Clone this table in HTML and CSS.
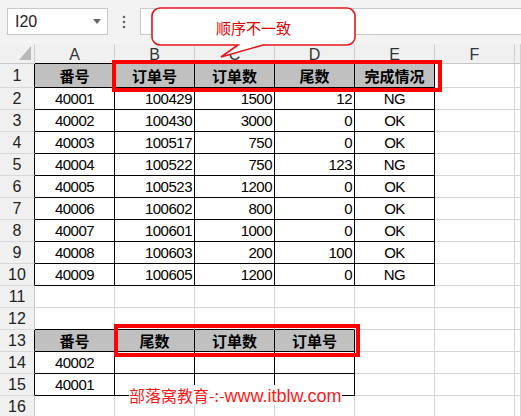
FILE: index.html
```html
<!DOCTYPE html>
<html lang="zh">
<head>
<meta charset="utf-8">
<title>Sheet</title>
<link rel="stylesheet" href="styles.css">
</head>
<body>
<div class="app">
  <div class="toolbar">
    <div class="namebox"><span class="nm">I20</span><span class="caret"></span></div>
    <div class="dots"><svg width="4" height="14" viewBox="0 0 4 14"><circle cx="2" cy="2" r="1.3" fill="#666"/><circle cx="2" cy="7" r="1.3" fill="#666"/><circle cx="2" cy="12" r="1.3" fill="#666"/></svg></div>
    <div class="fx"></div>
  </div>
  <div class="sheet">
    <div class="ch corner"><span class="tri"></span></div><div class="ch bb">A</div><div class="ch bb">B</div><div class="ch bb">C</div><div class="ch bb">D</div><div class="ch bb">E</div><div class="ch">F</div><div class="ch"></div>

    <div class="rh br">1</div><div class="c hd blk">番号</div><div class="c hd blk">订单号</div><div class="c hd blk">订单数</div><div class="c hd blk">尾数</div><div class="c hd blk">完成情况</div><div class="c"></div><div class="c"></div>

    <div class="rh br">2</div><div class="c ctr blk">40001</div><div class="c num blk">100429</div><div class="c num blk">1500</div><div class="c num blk">12</div><div class="c ctr blk">NG</div><div class="c"></div><div class="c"></div>
    <div class="rh br">3</div><div class="c ctr blk">40002</div><div class="c num blk">100430</div><div class="c num blk">3000</div><div class="c num blk">0</div><div class="c ctr blk">OK</div><div class="c"></div><div class="c"></div>
    <div class="rh br">4</div><div class="c ctr blk">40003</div><div class="c num blk">100517</div><div class="c num blk">750</div><div class="c num blk">0</div><div class="c ctr blk">OK</div><div class="c"></div><div class="c"></div>
    <div class="rh br">5</div><div class="c ctr blk">40004</div><div class="c num blk">100522</div><div class="c num blk">750</div><div class="c num blk">123</div><div class="c ctr blk">NG</div><div class="c"></div><div class="c"></div>
    <div class="rh br">6</div><div class="c ctr blk">40005</div><div class="c num blk">100523</div><div class="c num blk">1200</div><div class="c num blk">0</div><div class="c ctr blk">OK</div><div class="c"></div><div class="c"></div>
    <div class="rh br">7</div><div class="c ctr blk">40006</div><div class="c num blk">100602</div><div class="c num blk">800</div><div class="c num blk">0</div><div class="c ctr blk">OK</div><div class="c"></div><div class="c"></div>
    <div class="rh br">8</div><div class="c ctr blk">40007</div><div class="c num blk">100601</div><div class="c num blk">1000</div><div class="c num blk">0</div><div class="c ctr blk">OK</div><div class="c"></div><div class="c"></div>
    <div class="rh br">9</div><div class="c ctr blk">40008</div><div class="c num blk">100603</div><div class="c num blk">200</div><div class="c num blk">100</div><div class="c ctr blk">OK</div><div class="c"></div><div class="c"></div>
    <div class="rh br">10</div><div class="c ctr blk">40009</div><div class="c num blk">100605</div><div class="c num blk">1200</div><div class="c num blk">0</div><div class="c ctr blk">NG</div><div class="c"></div><div class="c"></div>

    <div class="rh">11</div><div class="c"></div><div class="c"></div><div class="c"></div><div class="c"></div><div class="c"></div><div class="c"></div><div class="c"></div>
    <div class="rh">12</div><div class="c bb"></div><div class="c bb"></div><div class="c bb"></div><div class="c bb"></div><div class="c"></div><div class="c"></div><div class="c"></div>

    <div class="rh br">13</div><div class="c hd blk">番号</div><div class="c hd blk">尾数</div><div class="c hd blk">订单数</div><div class="c hd blk">订单号</div><div class="c"></div><div class="c"></div><div class="c"></div>
    <div class="rh br">14</div><div class="c ctr blk">40002</div><div class="c blk"></div><div class="c blk"></div><div class="c blk"></div><div class="c"></div><div class="c"></div><div class="c"></div>
    <div class="rh br">15</div><div class="c ctr blk">40001</div><div class="c blk"></div><div class="c blk"></div><div class="c blk"></div><div class="c"></div><div class="c"></div><div class="c"></div>
    <div class="rh">16</div><div class="c"></div><div class="c"></div><div class="c"></div><div class="c"></div><div class="c"></div><div class="c"></div><div class="c"></div>
  </div>

  <div class="callout">
    <svg width="210" height="56" viewBox="0 0 210 56"><path d="M10,3 H197 A8,8 0 0 1 205,11 V32 A8,8 0 0 1 197,40 H113 L71,52 L88,40 H10 A8,8 0 0 1 2,32 V11 A8,8 0 0 1 10,3 Z" fill="#fff" stroke="#e8161d" stroke-width="1.6"/></svg>
    <div class="callout-text">顺序不一致</div>
  </div>
  <div class="redbox box1"></div>
  <div class="redbox box2"></div>
  <div class="watermark">部落窝教育-:-<span class="wm-lat">www.itblw.com</span></div>
</div>
</body>
</html>
```
FILE: styles.css
```css
html, body {
  margin: 0;
  padding: 0;
  background: #fff;
}
body {
  width: 521px;
  height: 416px;
  overflow: hidden;
  font-family: "Liberation Sans", "Noto Sans CJK SC", sans-serif;
}
.app {
  position: relative;
  width: 521px;
  height: 416px;
  overflow: hidden;
}
.toolbar {
  height: 44px;
  box-sizing: border-box;
  padding-top: 8px;
  background: #f3f3f3;
  display: flex;
  align-items: flex-start;
}
.namebox {
  margin-left: 7px;
  width: 101px;
  height: 27px;
  box-sizing: border-box;
  border: 1px solid #c8c8c8;
  background: #fff;
  display: flex;
  align-items: center;
  justify-content: space-between;
  padding: 0 6px 0 7px;
}
.nm {
  font-size: 16px;
  color: #222;
}
.caret {
  width: 0;
  height: 0;
  border-left: 4px solid transparent;
  border-right: 4px solid transparent;
  border-top: 5px solid #666;
}
.dots {
  width: 32px;
  height: 27px;
  display: flex;
  align-items: center;
  justify-content: center;
}
.fx {
  flex: 1;
  height: 27px;
  box-sizing: border-box;
  border: 1px solid #c8c8c8;
  border-right: none;
  background: #fff;
}
.sheet {
  display: grid;
  grid-template-columns: 35px repeat(6, 80px) 1fr;
  grid-template-rows: 20px 24px;
  grid-auto-rows: 22px;
}
.sheet > div {
  box-sizing: border-box;
  border-right: 1px solid #d4d4d4;
  border-bottom: 1px solid #d4d4d4;
  display: flex;
  align-items: center;
  overflow: hidden;
  white-space: nowrap;
}
.ch {
  background: #f0f0f0;
  justify-content: center;
  font-size: 16px;
  color: #333;
  padding-top: 2px;
}
.sheet > .ch {
  border-bottom-color: #c6c6c6;
  border-right-color: #d0d0d0;
}
.corner {
  position: relative;
}
.tri {
  position: absolute;
  right: 3px;
  bottom: 3px;
  width: 0;
  height: 0;
  border-left: 12px solid transparent;
  border-bottom: 14px solid #b8b8b8;
}
.rh {
  background: #f0f0f0;
  justify-content: center;
  font-size: 16px;
  color: #222;
}
.sheet > .rh {
  border-right-color: #c6c6c6;
  border-bottom-color: #d8d8d8;
}
.c {
  font-size: 15px;
  letter-spacing: -0.5px;
  color: #000;
}
.ctr {
  justify-content: center;
}
.num {
  justify-content: flex-end;
  padding-right: 2px;
}
.hd {
  background: #c0c0c0;
  justify-content: center;
  font-weight: bold;
  letter-spacing: 0;
  font-family: "Noto Sans CJK SC", sans-serif;
}
.sheet > .blk {
  border-right-color: #000;
  border-bottom-color: #000;
}
.sheet > .bb {
  border-bottom-color: #000;
}
.sheet > .br {
  border-right-color: #000;
}
.callout {
  position: absolute;
  left: 150px;
  top: 5px;
  width: 210px;
  height: 56px;
}
.callout svg {
  display: block;
}
.callout-text {
  position: absolute;
  left: 2px;
  top: 3px;
  width: 203px;
  height: 37px;
  display: flex;
  align-items: center;
  justify-content: center;
  font-family: "Noto Sans CJK SC", sans-serif;
  font-size: 15px;
  color: #e00000;
  padding-top: 2px;
  box-sizing: border-box;
}
.redbox {
  position: absolute;
  border: 4px solid #ff0000;
  box-sizing: border-box;
}
.box1 {
  left: 112px;
  top: 60px;
  width: 330px;
  height: 32px;
}
.box2 {
  left: 114px;
  top: 324px;
  width: 246px;
  height: 33px;
}
.watermark {
  position: absolute;
  left: 129px;
  top: 385px;
  height: 20px;
  line-height: 20px;
  background: #fff;
  color: #ff1a1a;
  font-size: 16px;
  font-family: "Noto Sans CJK SC", sans-serif;
  white-space: nowrap;
}
.wm-lat {
  font-family: "Liberation Sans", sans-serif;
  font-size: 18px;
}
```
